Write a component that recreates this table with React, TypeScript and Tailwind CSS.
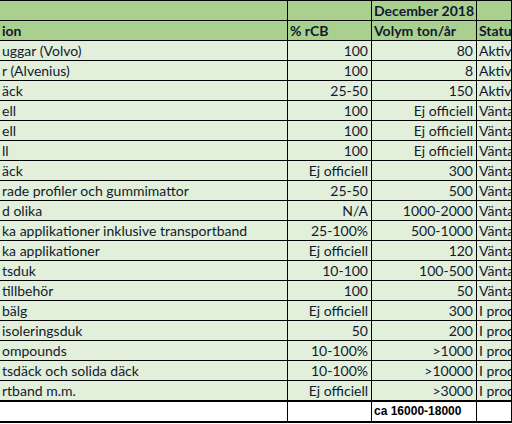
const rows: [string, string, string, string][] = [
  ['uggar (Volvo)', '100', '80', 'Aktiva'],
  ['r (Alvenius)', '100', '8', 'Aktiva'],
  ['äck', '25-50', '150', 'Aktiva'],
  ['ell', '100', 'Ej officiell', 'Väntar'],
  ['ell', '100', 'Ej officiell', 'Väntar'],
  ['ll', '100', 'Ej officiell', 'Väntar'],
  ['äck', 'Ej officiell', '300', 'Väntar'],
  ['rade profiler och gummimattor', '25-50', '500', 'Väntar'],
  ['d olika', 'N/A', '1000-2000', 'Väntar'],
  ['ka applikationer inklusive transportband', '25-100%', '500-1000', 'Väntar'],
  ['ka applikationer', 'Ej officiell', '120', 'Väntar'],
  ['tsduk', '10-100', '100-500', 'Väntar'],
  ['tillbehör', '100', '50', 'Väntar'],
  ['bälg', 'Ej officiell', '300', 'I produktion'],
  ['isoleringsduk', '50', '200', 'I produktion'],
  ['ompounds', '10-100%', '>1000', 'I produktion'],
  ['tsdäck och solida däck', '10-100%', '>10000', 'I produktion'],
  ['rtband m.m.', 'Ej officiell', '>3000', 'I produktion'],
];

const cols = 'grid grid-cols-[288px_84px_105px_1fr]';
const cell = 'h-full border-r border-black px-[2px] leading-[19px] whitespace-nowrap overflow-hidden';

export default function App() {
  return (
    <div className="w-[512px] h-[424px] overflow-hidden bg-white text-[14px] text-[#111a30] font-['Lato','Liberation_Sans',sans-serif]">
      <div className="border-t border-black">
        {/* header */}
        <div className={`${cols} h-[20px] border-b border-black bg-[#a9d08e] font-bold`}>
          <div className={cell} />
          <div className={cell} />
          <div className={`${cell} text-center`}>December 2018</div>
          <div className={cell} />
        </div>
        <div className={`${cols} h-[20px] border-b border-black bg-[#a9d08e] font-bold`}>
          <div className={`${cell} px-0`}>ion</div>
          <div className={cell}>% rCB</div>
          <div className={cell}>Volym ton/år</div>
          <div className={cell}>Status</div>
        </div>

        {rows.map((r, i) => (
          <div
            key={i}
            className={`${cols} bg-[#e2efda] ${
              i === rows.length - 1 ? 'h-[21px] border-b-2' : 'h-[20px] border-b'
            } border-black`}
          >
            <div className={`${cell} px-0`}>{r[0]}</div>
            <div className={`${cell} text-right pr-[3px]`}>{r[1]}</div>
            <div className={`${cell} text-right pr-[3px]`}>{r[2]}</div>
            <div className={cell}>{r[3]}</div>
          </div>
        ))}

        {/* total */}
        <div className={`${cols} h-[21px] border-b-2 border-black bg-white`}>
          <div className={cell} />
          <div className={cell} />
          <div className={`${cell} font-bold text-[12px] text-black font-['Liberation_Sans',sans-serif]`}>
            ca 16000-18000
          </div>
          <div className={cell} />
        </div>
      </div>
    </div>
  );
}
